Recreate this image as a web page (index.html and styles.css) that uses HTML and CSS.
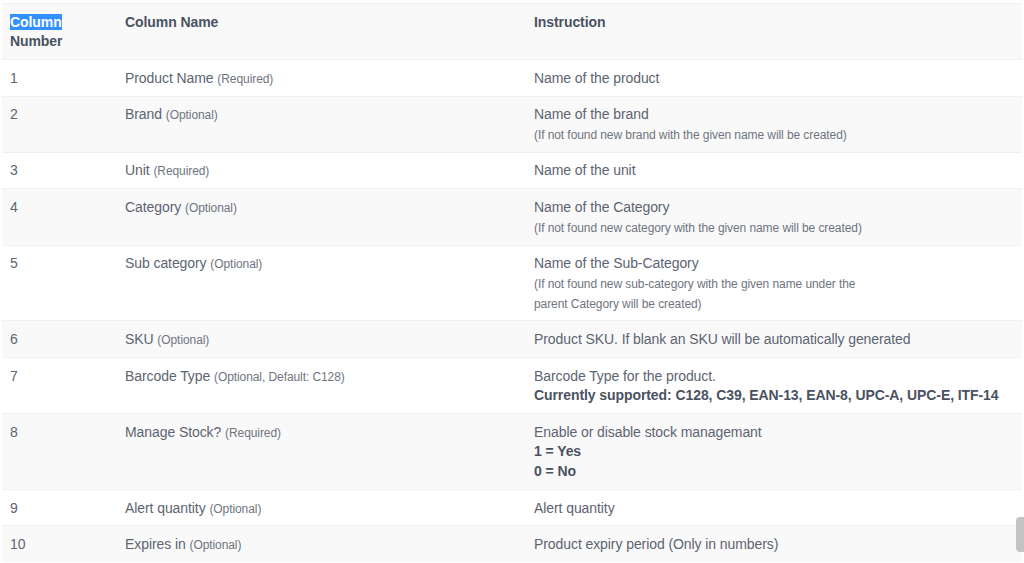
FILE: index.html
```html
<!DOCTYPE html>
<html>
<head>
<meta charset="utf-8">
<link rel="stylesheet" href="styles.css">
</head>
<body>
<div class="wrap">
<table class="tbl">
  <thead>
    <tr>
      <th class="c1"><span class="sel">Column</span><br>Number</th>
      <th class="c2">Column Name</th>
      <th class="c3">Instruction</th>
    </tr>
  </thead>
  <tbody>
    <tr><td>1</td><td>Product Name <small>(Required)</small></td><td>Name of the product</td></tr>
    <tr><td>2</td><td>Brand <small>(Optional)</small></td><td>Name of the brand<br><small>(If not found new brand with the given name will be created)</small></td></tr>
    <tr><td>3</td><td>Unit <small>(Required)</small></td><td>Name of the unit</td></tr>
    <tr><td>4</td><td>Category <small>(Optional)</small></td><td>Name of the Category<br><small>(If not found new category with the given name will be created)</small></td></tr>
    <tr><td>5</td><td>Sub category <small>(Optional)</small></td><td>Name of the Sub-Category<br><small>(If not found new sub-category with the given name under the<br>parent Category will be created)</small></td></tr>
    <tr><td>6</td><td>SKU <small>(Optional)</small></td><td>Product SKU. If blank an SKU will be automatically generated</td></tr>
    <tr><td>7</td><td>Barcode Type <small>(Optional, Default: C128)</small></td><td>Barcode Type for the product.<br><strong>Currently supported: C128, C39, EAN-13, EAN-8, UPC-A, UPC-E, ITF-14</strong></td></tr>
    <tr><td>8</td><td>Manage Stock? <small>(Required)</small></td><td>Enable or disable stock managemant<br><strong>1 = Yes<br>0 = No</strong></td></tr>
    <tr><td>9</td><td>Alert quantity <small>(Optional)</small></td><td>Alert quantity</td></tr>
    <tr><td>10</td><td>Expires in <small>(Optional)</small></td><td>Product expiry period (Only in numbers)</td></tr>
  </tbody>
</table>
<div class="thumb"></div>
</div>
</body>
</html>
```

FILE: styles.css
```css
html, body {
  margin: 0;
  padding: 0;
  background: #ffffff;
}
body {
  font-family: "Liberation Sans", Arial, sans-serif;
  font-size: 14px;
  line-height: 19.7px;
  color: #5d6472;
  letter-spacing: -0.08px;
}
.wrap {
  padding: 3px 2px 0 2px;
}
.tbl {
  width: 1020px;
  border-collapse: collapse;
  border-spacing: 0;
  border-top: 1px solid #f0f0f0;
}
.tbl th, .tbl td {
  padding: 8.6px 8px 7.2px 8px;
  text-align: left;
  vertical-align: top;
  line-height: 19.7px;
}
.tbl th {
  font-weight: bold;
  color: #4a5262;
  background: #f9f9f9;
  border-bottom: 1px solid #f0f0f0;
}
.tbl td {
  border-top: 1px solid #f0f0f0;
}
.c1 { width: 99px; }
.c2 { width: 393px; }
.tbl tbody tr:nth-child(even) td {
  background: #f9f9f9;
}
.tbl small {
  font-size: 12px;
  line-height: 1;
  color: #6f7580;
}
.tbl strong {
  color: #4a5262;
}
.sel {
  background: #3390ff;
  color: #ffffff;
}
.thumb {
  position: absolute;
  right: 0;
  top: 517px;
  width: 8px;
  height: 35px;
  background: #c4c4c4;
  border-radius: 4px 0 0 4px;
}
```
